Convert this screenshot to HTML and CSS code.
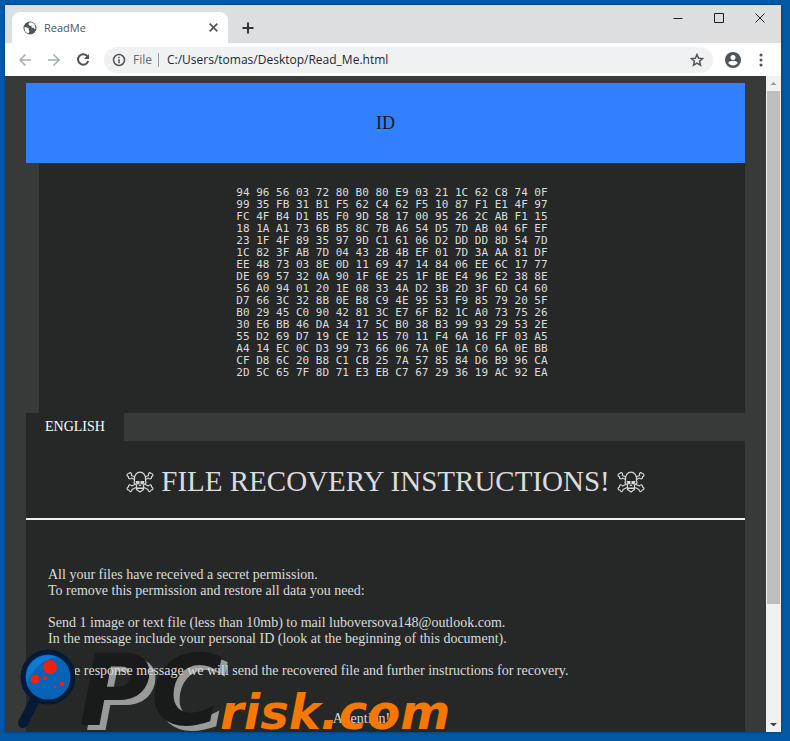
FILE: index.html
```html
<!DOCTYPE html>
<html lang="en">
<head>
<meta charset="utf-8">
<title>ReadMe</title>
<link rel="stylesheet" href="styles.css">
</head>
<body>
<div class="window">
  <header class="titlebar">
    <div class="tab">
      <svg class="globe" viewBox="0 0 14 14" aria-hidden="true"><circle cx="7" cy="7" r="6.5" fill="#4d555b"/><path d="M1.500 6 4 6.500l2 1-.5 1.500 1 1-1 2.500C3 12 1.200 9.500 1.500 6zM6 1.500l-.5 2L7 5l1.500-.5L8.500 6.500l2 .5 1.800 1.200c.8-3-1-6.200-4-6.700z" fill="#fff"/></svg>
      <span class="tab-name">ReadMe</span>
      <button class="icon-button tab-close" aria-label="Close tab"><svg viewBox="0 0 10 10"><path d="m1.500 1.500 7 7m0-7-7 7"/></svg></button>
    </div>
    <button class="icon-button new-tab" aria-label="New tab"><svg viewBox="0 0 12 12"><path d="M6 .5v11M.5 6h11"/></svg></button>
    <div class="window-controls">
      <button class="icon-button" aria-label="Minimize"><svg viewBox="0 0 10 10"><path d="M.5 5.500h9"/></svg></button>
      <button class="icon-button" aria-label="Maximize"><svg viewBox="0 0 10 10"><path d="M.5.5h9v9h-9z"/></svg></button>
      <button class="icon-button" aria-label="Close"><svg viewBox="0 0 10 10"><path d="m.5.5 9 9m0-9-9 9"/></svg></button>
    </div>
  </header>
  <div class="toolbar">
    <button class="icon-button nav muted" aria-label="Back"><svg viewBox="0 0 14 14"><path d="M13 7H2m5.500-5.500L2 7l5.500 5.500"/></svg></button>
    <button class="icon-button nav muted" aria-label="Forward"><svg viewBox="0 0 14 14"><path d="M1 7h11M6.500 1.500 12 7l-5.500 5.500"/></svg></button>
    <button class="icon-button nav reload" aria-label="Reload"><svg viewBox="0 0 14 14"><path d="M11.500 3.500A5.200 5.200 0 1 0 12.200 8"/><path d="M13 1v5H8z" fill="currentColor" stroke="none"/></svg></button>
    <div class="address">
      <svg class="info" viewBox="0 0 14 14" aria-hidden="true"><circle cx="7" cy="7" r="5.500"/><path d="M7 6.200v4M7 3.800v1.400"/></svg>
      <label class="scheme" for="url">File</label>
      <input id="url" type="text" value="C:/Users/tomas/Desktop/Read_Me.html">
      <button class="icon-button star" aria-label="Bookmark"><svg viewBox="0 0 14 14"><path d="m7 1.500 1.600 3.700 4 .4-3 2.700.9 4L7 10.200l-3.500 2.100.9-4-3-2.700 4-.4z"/></svg></button>
    </div>
    <button class="icon-button profile" aria-label="Profile"><svg viewBox="0 0 16 16"><circle cx="8" cy="8" r="8" fill="currentColor" stroke="none"/><circle cx="8" cy="5.400" r="2.500" fill="#fff" stroke="none"/><path d="M3.200 11c1-3 8.600-3 9.600 0-2.300 3.300-7.300 3.300-9.600 0z" fill="#fff" stroke="none"/></svg></button>
    <button class="icon-button more" aria-label="Menu"><svg viewBox="0 0 4 14"><g fill="currentColor" stroke="none"><circle cx="2" cy="2" r="1.500"/><circle cx="2" cy="7" r="1.500"/><circle cx="2" cy="12" r="1.500"/></g></svg></button>
  </div>
  <div class="viewport">
    <main class="page">
      <h2 class="id-bar">ID</h2>
      <pre class="key">94 96 56 03 72 80 B0 80 E9 03 21 1C 62 C8 74 0F
99 35 FB 31 B1 F5 62 C4 62 F5 10 87 F1 E1 4F 97
FC 4F B4 D1 B5 F0 9D 58 17 00 95 26 2C AB F1 15
18 1A A1 73 6B B5 8C 7B A6 54 D5 7D AB 04 6F EF
23 1F 4F 89 35 97 9D C1 61 06 D2 DD DD 8D 54 7D
1C 82 3F AB 7D 04 43 2B 4B EF 01 7D 3A AA 81 DF
EE 48 73 03 8E 0D 11 69 47 14 84 06 EE 6C 17 77
DE 69 57 32 0A 90 1F 6E 25 1F BE E4 96 E2 38 8E
56 A0 94 01 20 1E 08 33 4A D2 3B 2D 3F 6D C4 60
D7 66 3C 32 8B 0E B8 C9 4E 95 53 F9 85 79 20 5F
B0 29 45 C0 90 42 81 3C E7 6F B2 1C A0 73 75 26
30 E6 BB 46 DA 34 17 5C B0 38 B3 99 93 29 53 2E
55 D2 69 D7 19 CE 12 15 70 11 F4 6A 16 FF 03 A5
A4 14 EC 0C D3 99 73 66 06 7A 0E 1A C0 6A 0E BB
CF D8 6C 20 B8 C1 CB 25 7A 57 85 84 D6 B9 96 CA
2D 5C 65 7F 8D 71 E3 EB C7 67 29 36 19 AC 92 EA</pre>
      <div class="languages"><button class="language">ENGLISH</button></div>
      <article class="note">
        <h1 class="heading">
          <svg class="skull" viewBox="0 0 28 22" aria-hidden="true"><use href="#skull"/></svg>
          <span>FILE RECOVERY INSTRUCTIONS!</span>
          <svg class="skull" viewBox="0 0 28 22" aria-hidden="true"><use href="#skull"/></svg>
        </h1>
        <div class="message">
          <p>All your files have received a secret permission.<br>To remove this permission and restore all data you need:</p>
          <p>Send 1 image or text file (less than 10mb) to mail luboversova148@outlook.com.<br>In the message include your personal ID (look at the beginning of this document).</p>
          <p>In the response message we will send the recovered file and further instructions for recovery.</p>
          <p class="attention">Attention!</p>
        </div>
      </article>
    </main>
    <div class="mark mark-pc">PC</div>
    <div class="mark mark-risk">risk.com</div>
    <svg class="lens" viewBox="0 0 60 80" aria-hidden="true">
      <path d="M20 51 8 74" stroke="#061a35" stroke-width="10" stroke-linecap="round"/>
      <circle cx="33" cy="28" r="25" fill="#0563b8" stroke="#061a35" stroke-width="5"/>
      <path d="M12 34A22 22 0 0 1 42 8C28 10 17 20 12 34z" fill="#0d79d2"/>
      <g fill="#ec2308"><circle cx="35" cy="18" r="7"/><circle cx="20" cy="30" r="4.500"/><circle cx="30" cy="29" r="2"/><circle cx="47" cy="35" r="2.300"/><circle cx="40" cy="38" r="1.200"/></g>
    </svg>
    <div class="scrollbar">
      <button class="icon-button arrow up" aria-label="Scroll up"><svg viewBox="0 0 8 4"><path d="M0 4 4 0l4 4z"/></svg></button>
      <div class="track"><div class="thumb"></div></div>
      <button class="icon-button arrow down" aria-label="Scroll down"><svg viewBox="0 0 8 4"><path d="m0 0 4 4 4-4z"/></svg></button>
    </div>
  </div>
</div>
<svg class="symbols" aria-hidden="true">
  <symbol id="skull" viewBox="0 0 28 22">
    <g fill="none" stroke="#d4d6d8" stroke-width="1.200" stroke-linejoin="round">
      <path d="M9 6 5.500 4.500C6 2 4 .5 3 2.500.5 2.500.5 5.500 2.500 5.500 2 8 4.500 8.500 5.500 7L8.500 8.500M19 6l3.500-1.500C22 2 24 .5 25 2.500c2.500 0 2.500 3 .5 3 .5 2.500-2 3-3 1.500l-3 1.500M9 13.500 5.500 15C4.500 13 2 13.500 2.500 16 .5 16.500.5 19 3 19c.5 2.500 3 2 3-.5l4-2M19 13.500l3.500 1.500c1-2 3.500-1.500 3 1 2 .5 2 3-.5 3-.5 2.500-3 2-3-.5l-4-2"/>
      <path d="M8.500 9C7.500-1.500 20.500-1.500 19.500 9l.5 3-2.500 2v4.500L14 21l-3.500-2.500V14L8 12z"/>
    </g>
    <g fill="#d4d6d8"><path d="M9.500 10h4v3l-3 .5zM14.500 10h4l-1 3.500-3-.5zM12.500 15l1.500-2 1.500 2zM11 16.500h6V18h-6z"/></g>
  </symbol>
</svg>
</body>
</html>
```
FILE: styles.css
```css
* { box-sizing: border-box; }
body {
  margin: 0;
  height: 100vh;
  padding: 5px 9px 9px 5px;
  overflow: hidden;
  background: #0259a5;
  font-family: "Open Sans", "Noto Sans", sans-serif;
  font-size: 12px;
}
.window {
  display: flex;
  flex-direction: column;
  height: 100%;
  box-shadow: 0 0 3px #00335f;
}
.symbols { display: none; }
svg { display: block; }
.icon-button {
  display: flex;
  align-items: center;
  justify-content: center;
  flex: none;
  padding: 0;
  border: 0;
  background: none;
  color: #4d555b;
}
.icon-button svg { fill: none; stroke: currentColor; }

.titlebar {
  display: flex;
  flex: none;
  height: 38px;
  padding-left: 7px;
  background: #dcdedf;
}
.tab {
  display: flex;
  align-items: center;
  gap: 7px;
  width: 216px;
  margin-top: 7px;
  padding: 0 9px 0 11px;
  border-radius: 8px 8px 0 0;
  background: #fff;
  color: #4d555b;
  font-size: 11px;
}
.globe { width: 14px; }
.tab-name { flex: 1; }
.tab-close svg { width: 11px; stroke-width: 1.5; }
.new-tab { width: 40px; margin-top: 7px; color: #30363a; }
.new-tab svg { width: 12px; stroke-width: 2; }
.window-controls {
  display: flex;
  gap: 31px;
  height: 26px;
  margin-left: auto;
  padding-right: 16px;
}
.window-controls .icon-button { color: #202020; }
.window-controls svg { width: 10px; }

.toolbar {
  display: flex;
  align-items: center;
  flex: none;
  height: 33px;
  padding-left: 12px;
  background: #fff;
}
.nav { width: 15px; margin-right: 14px; }
.nav svg { width: 14px; stroke-width: 1.5; }
.muted { color: #a9adb0; }
.reload svg { stroke-width: 2; }
.address {
  display: flex;
  align-items: center;
  flex: 1;
  height: 26px;
  padding: 0 9px 0 8px;
  border-radius: 13px;
  background: #eff1f3;
}
.info { width: 14px; margin-right: 7px; fill: none; stroke: #4d555b; stroke-width: 1.5; }
.scheme { padding-right: 6px; border-right: 1px solid #9a9ea2; color: #63696e; line-height: 14px; }
.address input {
  flex: 1;
  min-width: 0;
  padding: 0 0 0 8px;
  border: 0;
  outline: 0;
  background: none;
  color: #24282b;
  font: inherit;
}
.star svg { width: 14px; stroke-width: 1.5; }
.profile { margin: 0 18px 0 12px; }
.profile svg { width: 16px; }
.more { margin-right: 18px; }
.more svg { width: 4px; }

.viewport { position: relative; display: flex; flex: 1; min-height: 0; }
.page {
  flex: 1;
  min-width: 0;
  overflow: hidden;
  padding: 7px 21px 0;
  background: #383a39;
  color: #dcdcdc;
  font-family: "Liberation Serif", serif;
}
.id-bar {
  margin: 0;
  background: #3380ff;
  color: #101820;
  font-size: 18px;
  font-weight: 400;
  line-height: 80px;
  text-align: center;
}
.key {
  margin: 0 0 0 13px;
  padding: 24px 0 34px;
  background: #262828;
  font-family: "DejaVu Sans Mono", monospace;
  font-size: 11px;
  line-height: 12px;
  text-align: center;
}
.languages { display: flex; }
.language {
  padding: 0 19px;
  border: 0;
  background: #262828;
  color: #fff;
  font-family: inherit;
  font-size: 14px;
  line-height: 28px;
}
.note { height: 100%; background: #262828; }
.heading {
  display: flex;
  align-items: center;
  justify-content: center;
  gap: 7px;
  height: 79px;
  margin: 0;
  padding-top: 4px;
  border-bottom: 2px solid #f0f0f0;
  font-size: 29px;
  font-weight: 400;
}
.skull { width: 28px; height: 22px; }
.message {
  position: relative;
  z-index: 1;
  padding: 47px 22px;
  font-size: 14px;
  line-height: 16px;
}
.message p { margin: 0 0 16px; }
.message .attention { margin: 32px 0 0; padding-right: 48px; text-align: center; }

.mark {
  position: absolute;
  font-family: "DejaVu Sans", sans-serif;
  font-style: italic;
  font-weight: 700;
}
.mark-pc {
  left: 74px;
  bottom: 4px;
  color: #191a1a;
  font-size: 98px;
  line-height: 74px;
  text-shadow: 6px 5px #9a9a9a;
}
.mark-risk {
  z-index: 2;
  left: 215px;
  bottom: 2px;
  color: #f57800;
  font-size: 48px;
  line-height: 36px;
}
.lens { position: absolute; z-index: 2; left: 10px; bottom: 3px; width: 60px; height: 80px; fill: none; }

.scrollbar { display: flex; flex-direction: column; width: 15px; background: #f0f1f2; }
.arrow { height: 15px; }
.arrow svg { width: 7px; fill: #444; stroke: none; }
.up svg { fill: #999; }
.track { flex: 1; }
.thumb { height: 82%; margin: 0 1px; background: #bcbebf; }
```
